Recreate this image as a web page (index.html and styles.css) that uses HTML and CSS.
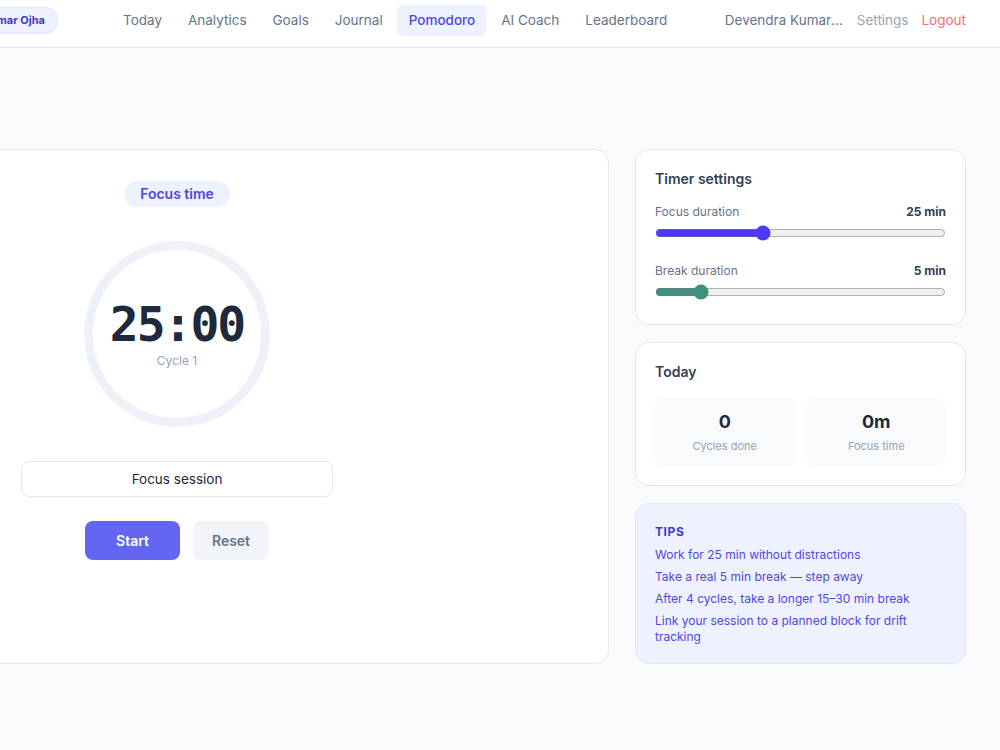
FILE: index.html
```html
<!DOCTYPE html>
<html lang="en">
<head>
  <meta charset="UTF-8">
  <title>Pomodoro</title>
  <meta name="viewport" content="width=device-width, initial-scale=1.0"/>
  <link rel="stylesheet" href="styles.css">
</head>
<body>

<nav class="topbar">
  <div class="topbar-inner">
    <div class="brand">
      <span class="logo">Drift</span>
      <span class="user-badge">Devendra Kumar Ojha</span>
    </div>
    <div class="links">
      <a href="#">Today</a>
      <a href="#">Analytics</a>
      <a href="#">Goals</a>
      <a href="#">Journal</a>
      <a href="#" class="active">Pomodoro</a>
      <a href="#">AI Coach</a>
      <a href="#">Leaderboard</a>
    </div>
    <div class="account">
      <span class="account-name">Devendra Kumar Ojha</span>
      <a href="#" class="settings">Settings</a>
      <a href="#" class="logout">Logout</a>
    </div>
  </div>
</nav>

<main class="page">
  <div class="layout">
    <section class="card timer-card">
      <span class="mode-pill">Focus time</span>
      <div class="ring">
        <svg width="186" height="186" viewBox="0 0 186 186">
          <circle cx="93" cy="93" r="88.5" fill="none" stroke="#eef2f8" stroke-width="9"/>
        </svg>
        <div class="ring-text">
          <div class="clock">25:00</div>
          <div class="cycle">Cycle 1</div>
        </div>
      </div>
      <input class="session" type="text" value="Focus session">
      <div class="actions">
        <button class="btn-start">Start</button>
        <button class="btn-reset">Reset</button>
      </div>
    </section>

    <aside class="side">
      <div class="card side-card settings-card">
        <h3>Timer settings</h3>
        <div class="setting-row">
          <span>Focus duration</span>
          <strong>25 min</strong>
        </div>
        <input class="range focus" type="range" min="5" max="60" value="25">
        <div class="setting-row second">
          <span>Break duration</span>
          <strong>5 min</strong>
        </div>
        <input class="range break" type="range" min="1" max="30" value="5">
      </div>

      <div class="card side-card">
        <h3>Today</h3>
        <div class="stats">
          <div class="stat">
            <div class="stat-value">0</div>
            <div class="stat-label">Cycles done</div>
          </div>
          <div class="stat">
            <div class="stat-value">0m</div>
            <div class="stat-label">Focus time</div>
          </div>
        </div>
      </div>

      <div class="card tips">
        <h4>TIPS</h4>
        <ul>
          <li>Work for 25 min without distractions</li>
          <li>Take a real 5 min break — step away</li>
          <li>After 4 cycles, take a longer 15–30 min break</li>
          <li>Link your session to a planned block for drift tracking</li>
        </ul>
      </div>
    </aside>
  </div>
</main>

</body>
</html>
```

FILE: styles.css
```css
body {
  font-family: Inter, "Noto Sans", sans-serif;
  margin: 0;
  padding: 0;
  background-color: #f8fafc;
  color: #1e293b;
  overflow: hidden;
}
.topbar {
  background-color: #ffffff;
  border-bottom: 1px solid #e2e8f0;
  height: 47px;
}
.topbar-inner {
  width: 1221px;
  margin-left: -255px;
  display: flex;
  align-items: center;
  height: 40px;
}
.brand {
  flex: 0 0 313px;
  display: flex;
  align-items: center;
  justify-content: space-between;
}
.logo {
  font-weight: 700;
  color: #4f46e5;
}
.user-badge {
  height: 24px;
  line-height: 24px;
  padding: 0 12px;
  border-radius: 999px;
  background-color: #eef2ff;
  border: 1px solid #e0e7ff;
  box-shadow: 0 1px 2px rgba(79, 70, 229, 0.12);
  color: #4338ca;
  font-size: 11px;
  font-weight: 700;
}
.links {
  display: flex;
  gap: 2px;
  margin-left: 53px;
}
.links a {
  color: #64748b;
  text-decoration: none;
  font-size: 13.5px;
  padding: 0 12px;
  height: 31px;
  line-height: 31px;
  border-radius: 6px;
}
.links a.active {
  background-color: #eef2ff;
  color: #4f46e5;
  font-weight: 500;
}
.account {
  margin-left: auto;
  display: flex;
  align-items: center;
  gap: 13px;
  font-size: 13.5px;
}
.account-name {
  color: #64748b;
  max-width: 119px;
  white-space: nowrap;
  overflow: hidden;
  text-overflow: ellipsis;
}
.account a {
  text-decoration: none;
}
.settings {
  color: #94a3b8;
}
.logout {
  color: #f87171;
}
.page {
  width: 1221px;
  margin-left: -255px;
  padding-top: 101px;
}
.layout {
  display: grid;
  grid-template-columns: 1fr 331px;
  gap: 26px;
}
.card {
  background-color: #ffffff;
  border: 1px solid #e2e8f0;
  border-radius: 14px;
}
.timer-card {
  display: flex;
  flex-direction: column;
  align-items: center;
  padding: 31px 20px;
}
.mode-pill {
  height: 26px;
  line-height: 26px;
  padding: 0 16px;
  border-radius: 999px;
  background-color: #eef2ff;
  color: #4f46e5;
  font-size: 14px;
  font-weight: 600;
}
.ring {
  position: relative;
  width: 186px;
  height: 186px;
  margin-top: 34px;
}
.ring svg {
  display: block;
}
.ring-text {
  position: absolute;
  inset: 0;
  display: flex;
  flex-direction: column;
  align-items: center;
  justify-content: center;
}
.clock {
  font-family: "DejaVu Sans Mono", monospace;
  font-size: 48px;
  font-weight: 700;
  line-height: 48px;
  letter-spacing: -2px;
  color: #1e293b;
}
.cycle {
  font-size: 12px;
  line-height: 16px;
  color: #94a3b8;
  margin-top: 5px;
}
.session {
  margin-top: 34px;
  width: 312px;
  height: 36px;
  box-sizing: border-box;
  border: 1px solid #e2e8f0;
  border-radius: 8px;
  text-align: center;
  font-family: inherit;
  font-size: 13.5px;
  color: #1e293b;
  background: #ffffff;
}
.actions {
  margin-top: 24px;
  display: flex;
  gap: 13px;
}
.actions button {
  height: 39px;
  border: none;
  border-radius: 8px;
  font-family: inherit;
  font-size: 14px;
  font-weight: 600;
  cursor: pointer;
}
.btn-start {
  width: 95px;
  background-color: #6366f1;
  color: #ffffff;
}
.btn-reset {
  width: 76px;
  background-color: #f1f5f9;
  color: #64748b;
}
.side {
  display: flex;
  flex-direction: column;
  gap: 17px;
}
.side-card {
  padding: 19px 19px 19px;
}
.settings-card {
  padding-bottom: 24px;
}
.side-card h3 {
  margin: 0;
  font-size: 14px;
  line-height: 20px;
  font-weight: 600;
  color: #334155;
}
.setting-row {
  display: flex;
  justify-content: space-between;
  font-size: 12px;
  line-height: 16px;
  color: #64748b;
  margin-top: 15px;
}
.setting-row.second {
  margin-top: 22px;
}
.setting-row strong {
  color: #334155;
  font-weight: 700;
}
.range {
  display: block;
  width: 100%;
  height: 16px;
  margin: 5px 0 0;
}
.range.focus {
  accent-color: #4f39f6;
}
.range.break {
  accent-color: #3f907f;
}
.stats {
  margin-top: 16px;
  display: grid;
  grid-template-columns: 1fr 1fr;
  gap: 12px;
}
.stat {
  background-color: #f8fafc;
  border-radius: 8px;
  padding: 12px;
  text-align: center;
}
.stat-value {
  font-size: 18px;
  line-height: 24px;
  font-weight: 700;
  color: #1e293b;
}
.stat-label {
  margin-top: 4px;
  font-size: 11px;
  line-height: 16px;
  color: #94a3b8;
}
.tips {
  background-color: #eef2ff;
  border-color: #e0e7ff;
  padding: 20px 19px 18px;
}
.tips h4 {
  margin: 0;
  font-size: 12px;
  line-height: 16px;
  font-weight: 700;
  letter-spacing: 0.05em;
  color: #4338ca;
}
.tips ul {
  list-style: none;
  margin: 7px 0 0;
  padding: 0;
  display: flex;
  flex-direction: column;
  gap: 6px;
}
.tips li {
  font-size: 12px;
  line-height: 16px;
  color: #4f46e5;
}
```
